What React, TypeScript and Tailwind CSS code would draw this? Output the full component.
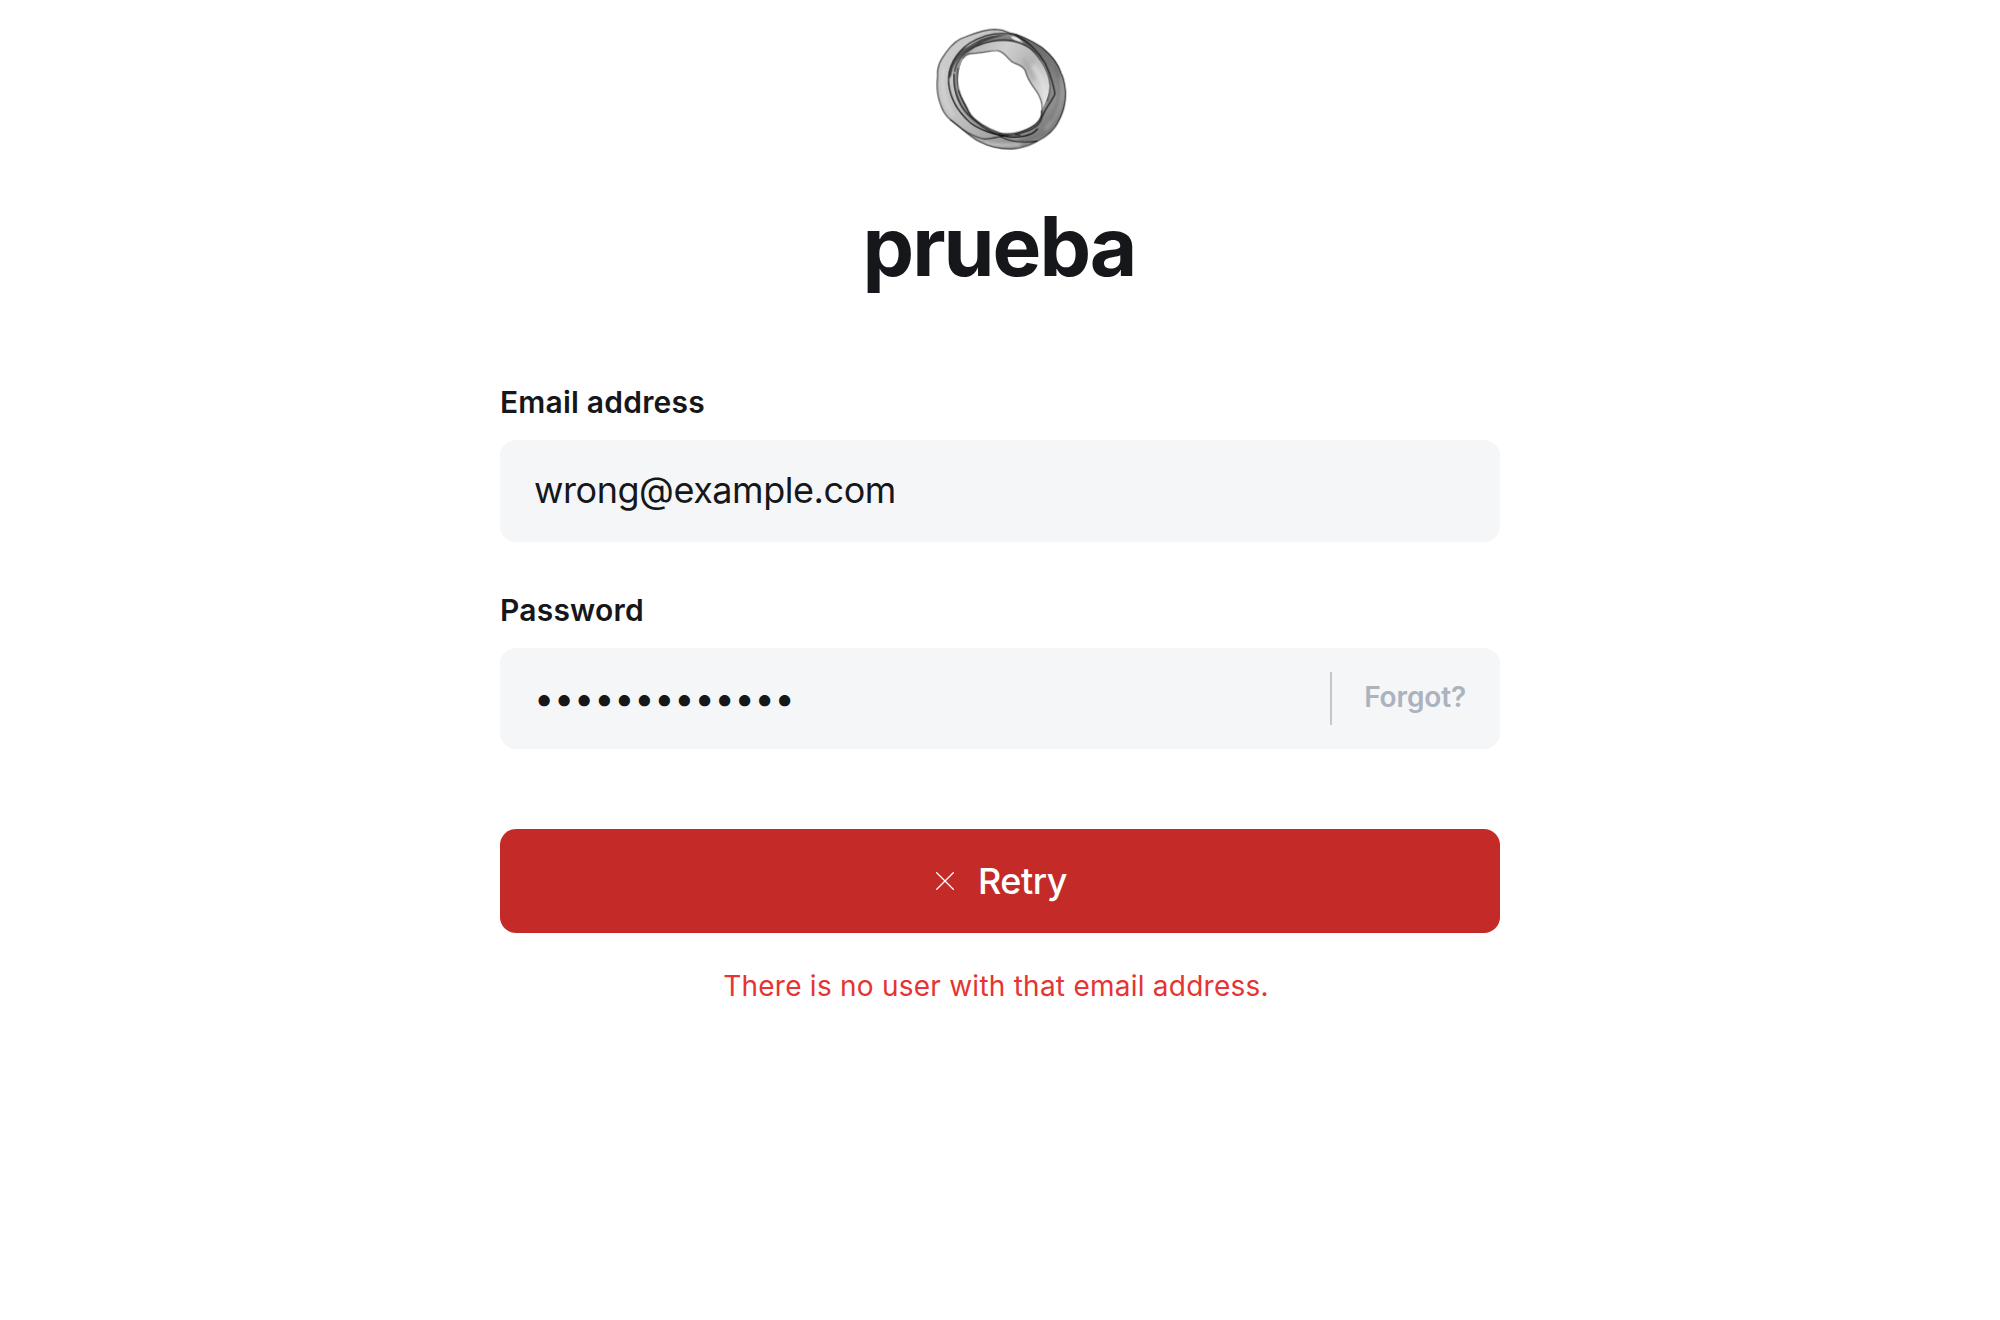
function RingLogo() {
  return (
    <svg className="block h-[150px] w-[160px]" viewBox="0 0 480 450" fill="none" role="img" aria-label="prueba">
      <defs>
        <linearGradient id="band" x1="60" y1="120" x2="430" y2="300" gradientUnits="userSpaceOnUse">
          <stop offset="0" stopColor="#cdcdcd" />
          <stop offset="0.35" stopColor="#bebebe" />
          <stop offset="0.7" stopColor="#989898" />
          <stop offset="1" stopColor="#7c7c7c" />
        </linearGradient>
        <linearGradient id="veil" x1="140" y1="90" x2="380" y2="250" gradientUnits="userSpaceOnUse">
          <stop offset="0" stopColor="#b0b0b0" />
          <stop offset="0.35" stopColor="#cfcfcf" />
          <stop offset="0.65" stopColor="#b6b6b6" />
          <stop offset="1" stopColor="#e2e2e2" />
        </linearGradient>
        <linearGradient id="shade" x1="290" y1="60" x2="400" y2="370" gradientUnits="userSpaceOnUse">
          <stop offset="0" stopColor="#666666" />
          <stop offset="0.35" stopColor="#777777" />
          <stop offset="0.65" stopColor="#949494" />
          <stop offset="1" stopColor="#747474" />
        </linearGradient>
        <filter id="soft" x="-10%" y="-10%" width="120%" height="120%">
          <feGaussianBlur stdDeviation="4" />
        </filter>
        <clipPath id="outline">
          <path
            clipRule="evenodd"
            d="M224 43C180 44 154 60 122 71C96 84 79 109 66 130C54 150 51 162 53 182C50 208 52 242 60 264C67 288 76 302 92 315C122 336 148 365 180 381C212 397 238 403 276 402C318 398 336 388 356 376C382 363 402 346 414 322C432 290 438 262 437 230C434 205 432 188 424 176C414 142 394 120 366 97C340 80 308 60 268 53C252 46 240 43 224 43ZM230 107C246 106 258 124 276 141C292 150 306 148 316 168C324 200 342 216 354 236C366 258 368 270 365 292C364 318 344 332 314 346C286 358 260 360 236 354C206 344 160 318 146 291C138 268 122 250 116 226C110 190 118 152 130 130C138 116 148 117 172 114C196 112 210 107 230 107Z"
          />
        </clipPath>
      </defs>
      <g clipPath="url(#outline)">
        <rect x="40" y="30" width="410" height="385" fill="url(#band)" />
        <path fill="url(#veil)" d="M120 150C150 96 180 86 220 80C268 74 322 88 348 120C374 150 388 184 390 216C388 240 376 262 364 290L250 230Z" />
        <path fill="url(#shade)" d="M280 54C340 74 414 120 426 176C444 232 440 280 414 322C396 352 350 384 290 378C330 366 362 340 364 300C372 276 392 256 406 236C404 200 380 150 350 118C328 96 300 78 280 54Z" />
        <path fill="#8a8a8a" opacity="0.75" d="M100 172C104 130 140 94 192 80C154 100 124 132 118 176C112 230 134 274 172 312C210 346 250 360 292 354C330 350 352 332 362 310C362 344 330 362 282 368C216 366 166 336 134 298C108 262 96 220 100 172Z" />
        <path fill="#6c6c6c" opacity="0.7" d="M170 82C200 62 240 56 274 62C290 68 310 84 324 98C280 74 226 74 170 96Z" />
        <g filter="url(#soft)">
          <path stroke="#d8d8d8" strokeWidth="9" d="M72 160C62 206 70 262 100 302" opacity="0.7" />
          <path stroke="#d8d8d8" strokeWidth="8" d="M108 100C140 76 176 64 214 54" opacity="0.4" />
          <path stroke="#a4a4a4" strokeWidth="9" d="M420 190C432 240 416 300 376 344" opacity="0.8" />
          <path stroke="#5c5c5c" strokeWidth="7" d="M404 150C428 210 420 270 392 316" opacity="0.5" />
          <path stroke="#e6e6e6" strokeWidth="14" d="M340 150C362 182 374 212 376 244" opacity="0.5" />
          <path stroke="#9a9a9a" strokeWidth="10" d="M310 130C322 150 328 172 344 194" opacity="0.45" />
          <path stroke="#cecece" strokeWidth="9" d="M190 384C222 394 262 392 302 388" opacity="0.8" />
        </g>
        <path fill="#e8e8e8" d="M271 64C287 64 302 71 309 86C294 82 281 76 271 64Z" />
        <path fill="#2e2e2e" opacity="0.75" d="M86 190C86 150 106 112 148 92C176 72 212 58 262 60C226 66 190 80 158 98C126 116 102 142 96 172C94 184 90 190 86 190Z" />
      </g>
      <g stroke="#0c0c0c" strokeWidth="3.6" strokeLinecap="round" strokeLinejoin="round">
        <path opacity="0.7" d="M224 43C180 44 154 60 122 71C96 84 79 109 66 130C54 150 51 162 53 182C50 208 52 242 60 264C67 288 76 302 92 315C122 336 148 365 180 381C212 397 238 403 276 402C318 398 336 388 356 376C382 363 402 346 414 322C432 290 438 262 437 230C434 205 432 188 424 176C414 142 394 120 366 97C340 80 308 60 268 53C252 46 240 43 224 43Z" />
        <path opacity="0.6" d="M130 130C138 116 148 117 172 114C196 112 210 107 230 107C246 106 258 124 276 141C292 150 306 148 316 168C324 200 342 216 354 236C366 258 368 270 365 292" />
        <path opacity="0.9" d="M86 204C82 156 108 112 150 84C190 60 238 50 284 60C322 76 356 110 376 146C388 172 400 206 405 236C396 260 372 282 364 312C356 336 326 350 286 358" />
        <path d="M86 204C90 250 112 288 150 322C186 350 230 360 272 366C300 368 336 362 352 342" />
        <path opacity="0.7" d="M104 168C110 134 138 106 176 90C218 74 262 70 298 82C326 92 346 112 360 134" />
        <path opacity="0.5" d="M360 134C378 160 388 186 390 210C390 230 386 246 382 258" />
        <path opacity="0.9" d="M102 178C100 232 120 278 158 312C192 342 226 360 262 364" />
        <path opacity="0.6" d="M114 160C106 206 122 256 150 296" />
        <path opacity="0.85" d="M116 226C122 250 138 268 146 291C162 318 204 342 240 354C270 362 316 350 346 328C362 314 366 300 365 288" />
        <path opacity="0.7" d="M92 315C128 346 160 368 196 372C232 370 264 354 300 360" />
        <path opacity="0.85" d="M240 364C270 380 310 384 352 378" />
      </g>
    </svg>
  );
}

function CloseIcon() {
  return (
    <svg className="block size-[18px]" viewBox="0 0 18 18" fill="none" stroke="white" strokeWidth="1.3" aria-hidden="true">
      <path d="M.3.3l17.4 17.4M17.7.3L.3 17.7" />
    </svg>
  );
}

export default function App() {
  return (
    <main className="flex h-[1320px] w-[2000px] flex-col items-center overflow-hidden bg-white pt-[15px] font-['Inter',sans-serif] text-[#16171b]">
      <RingLogo />
      <h1 className="mt-[34px] pr-0.5 text-[82px] leading-[96px] font-bold tracking-tight">prueba</h1>
      <form className="mt-[84px] flex w-[1000px] flex-col">
        <label className="text-[30px] leading-[46px] font-semibold tracking-[0.2px]">Email address</label>
        <div className="mt-[15px] flex h-[102px] items-center rounded-2xl bg-[#f5f6f8] px-[34px] pb-0.5 text-[36px] tracking-[-0.45px]">
          <span>wrong@example.com</span>
        </div>
        <label className="mt-[45px] text-[30px] leading-[46px] font-semibold tracking-[0.2px]">Password</label>
        <div className="mt-[15px] flex h-[101px] items-center rounded-2xl bg-[#f5f6f8] px-[34px] pb-0.5">
          <span className="text-[36px] tracking-[-0.2px]">•••••••••••••</span>
          <span className="mt-0.5 ml-auto h-[53px] w-0.5 bg-[#c5c6c9]" />
          <a className="ml-[32px] pb-0.5 text-[28px] font-semibold tracking-[-0.14px] text-[#abb3be]">Forgot?</a>
        </div>
        <button type="button" className="mt-20 flex h-[104px] items-center justify-center gap-[24px] rounded-2xl bg-[#c32a28] pl-[3px] text-[36px] font-medium tracking-[-0.5px] text-white">
          <CloseIcon />
          <span>Retry</span>
        </button>
        <p className="mt-8 pr-[8px] text-center text-[28px] leading-[42px] tracking-[0.24px] text-[#e53431]">There is no user with that email address.</p>
      </form>
    </main>
  );
}
